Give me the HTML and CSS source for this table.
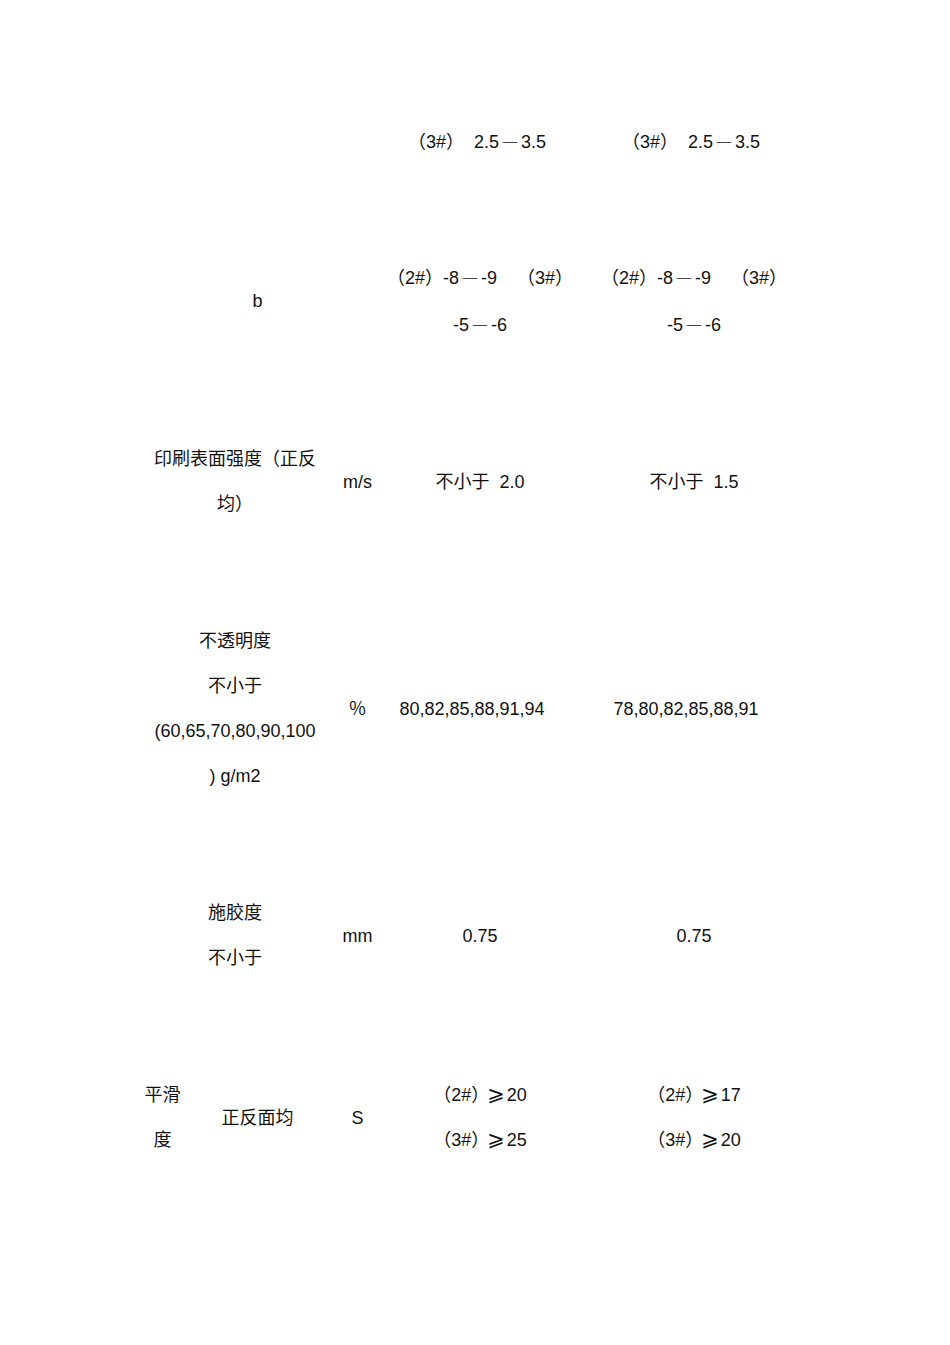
FILE: index.html
```html
<!DOCTYPE html>
<html lang="zh-CN">
<head>
<meta charset="utf-8">
<title>纸张指标</title>
<link rel="stylesheet" href="styles.css">
</head>
<body>
<div class="sheet">
  <div class="grid">
    <!-- row 0 -->
    <div class="cell r0 c3"><span class="t">（3#）&nbsp;&nbsp;2.5<span class="dash">—</span>3.5</span></div>
    <div class="cell r0 c4"><span class="t">（3#）&nbsp;&nbsp;2.5<span class="dash">—</span>3.5</span></div>

    <!-- row 1 -->
    <div class="cell r1 c1b"><span class="t">b</span></div>
    <div class="cell r1 c3"><span class="t">（2#）-8<span class="dash">—</span>-9&nbsp;&nbsp;&nbsp;&nbsp;（3#）<br>-5<span class="dash">—</span>-6</span></div>
    <div class="cell r1 c4"><span class="t">（2#）-8<span class="dash">—</span>-9&nbsp;&nbsp;&nbsp;&nbsp;（3#）<br>-5<span class="dash">—</span>-6</span></div>

    <!-- row 2 -->
    <div class="cell r2 c1"><span class="t">印刷表面强度（正反<br>均）</span></div>
    <div class="cell r2 c2"><span class="t">m/s</span></div>
    <div class="cell r2 c3"><span class="t">不小于&nbsp;&nbsp;2.0</span></div>
    <div class="cell r2 c4"><span class="t">不小于&nbsp;&nbsp;1.5</span></div>

    <!-- row 3 -->
    <div class="cell r3 c1"><span class="t">不透明度<br>不小于<br>(60,65,70,80,90,100<br>) g/m2</span></div>
    <div class="cell r3 c2"><span class="t">％</span></div>
    <div class="cell r3 c3 shift"><span class="t">80,82,85,88,91,94</span></div>
    <div class="cell r3 c4 shift"><span class="t">78,80,82,85,88,91</span></div>

    <!-- row 4 -->
    <div class="cell r4 c1"><span class="t">施胶度<br>不小于</span></div>
    <div class="cell r4 c2"><span class="t">mm</span></div>
    <div class="cell r4 c3"><span class="t">0.75</span></div>
    <div class="cell r4 c4"><span class="t">0.75</span></div>

    <!-- row 5 -->
    <div class="cell r5 c1a"><span class="t">平滑<br>度</span></div>
    <div class="cell r5 c1b"><span class="t">正反面均</span></div>
    <div class="cell r5 c2"><span class="t">S</span></div>
    <div class="cell r5 c3"><span class="t">（2#）<span class="geq">⩾</span>20<br>（3#）<span class="geq">⩾</span>25</span></div>
    <div class="cell r5 c4"><span class="t">（2#）<span class="geq">⩾</span>17<br>（3#）<span class="geq">⩾</span>20</span></div>
  </div>
</div>
</body>
</html>
```

FILE: styles.css
```css
html, body {
  margin: 0;
  padding: 0;
  background: #ffffff;
}

body {
  font-family: "Liberation Sans", Arial, "Noto Sans CJK SC", sans-serif;
  font-size: 18px;
  color: #111111;
}

.sheet {
  width: 950px;
  height: 1345px;
  padding: 61px 0 0 140px;
  box-sizing: border-box;
}

.grid {
  display: grid;
  grid-template-columns: 45px 145px 55px 190px 238px;
  grid-template-rows: 160px 160px 202px 252px 202px 162px;
}

.cell {
  display: flex;
  align-items: center;
  justify-content: center;
  text-align: center;
  line-height: 45px;
  white-space: nowrap;
}

.t {
  display: block;
}

.r0.c3,
.r0.c4 {
  padding-right: 6px;
}

.shift {
  padding-right: 16px;
}

.dash {
  font-family: "Noto Sans CJK SC", sans-serif;
  font-weight: 300;
  margin: 0 3px;
}

.geq {
  font-family: "DejaVu Sans", sans-serif;
  font-size: 21px;
  line-height: 1;
  margin: 0 2px 0 -2px;
}

.r0 { grid-row: 1; }
.r1 { grid-row: 2; }
.r2 { grid-row: 3; }
.r3 { grid-row: 4; }
.r4 { grid-row: 5; }
.r5 { grid-row: 6; }

.c1a { grid-column: 1; }
.c1b { grid-column: 2; }
.c1 { grid-column: 1 / span 2; }
.c2 { grid-column: 3; }
.c3 { grid-column: 4; }
.c4 { grid-column: 5; }
```
